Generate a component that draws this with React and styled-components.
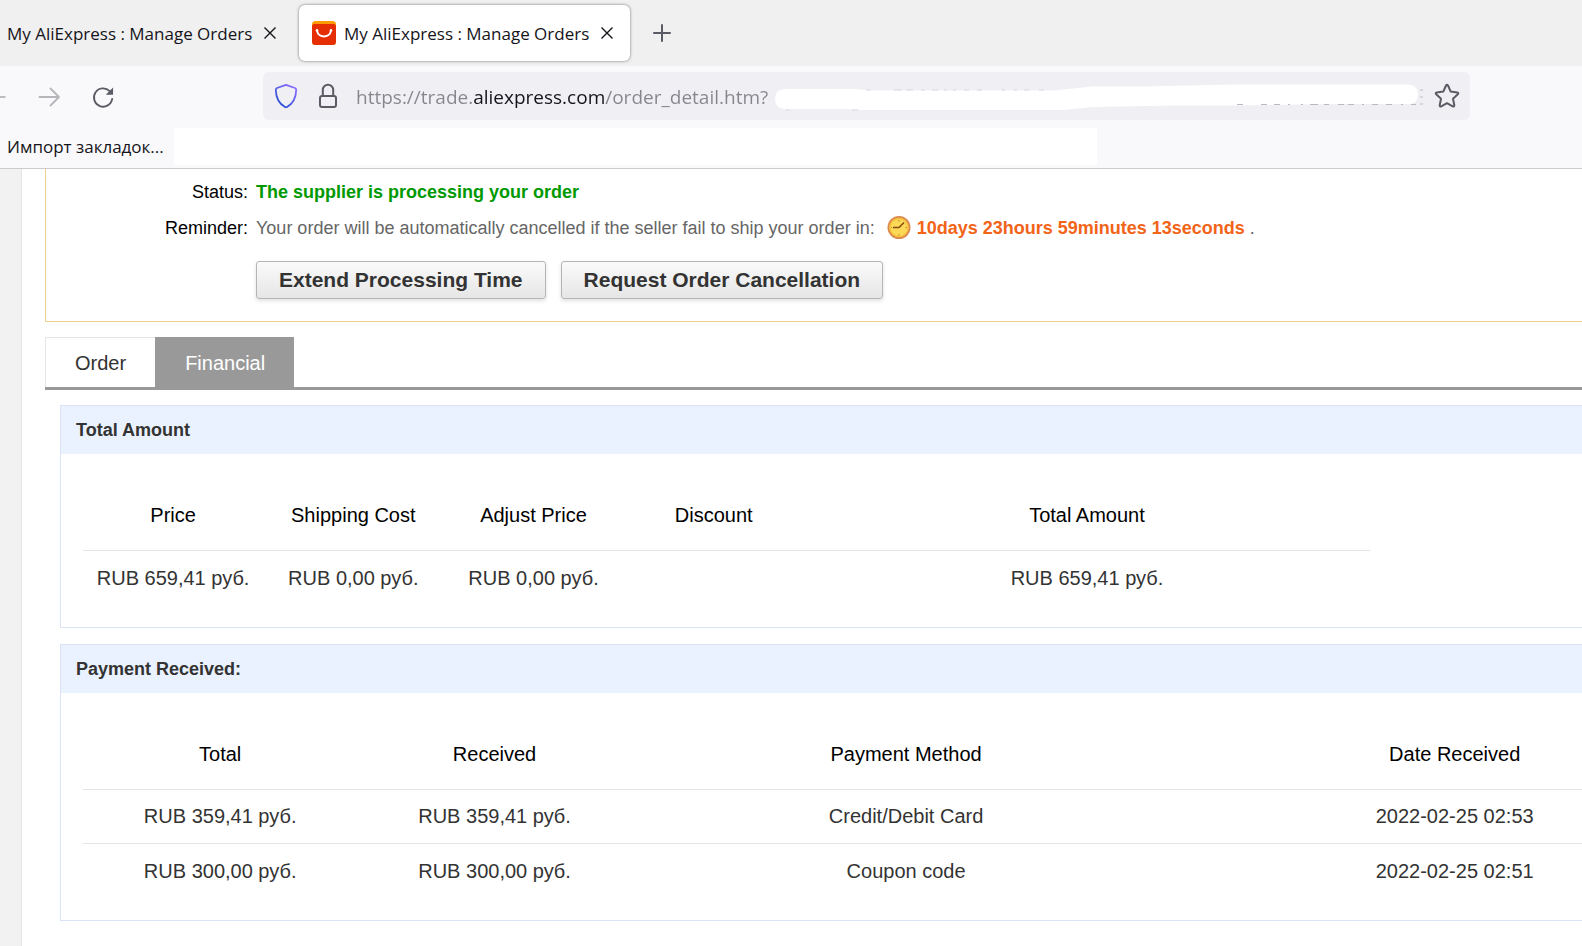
import React from "react";
import styled, { createGlobalStyle } from "styled-components";

const uiFont = '"Open Sans", "Noto Sans", sans-serif';
const pageFont = '"Liberation Sans", Arial, sans-serif';

const GlobalStyle = createGlobalStyle`
  *, *::before, *::after { box-sizing: border-box; }
  body { margin: 0; background: #fff; }
  button { font: inherit; border: 0; background: none; padding: 0; cursor: pointer; }
`;

const Window = styled.div`
  display: flex;
  flex-direction: column;
  min-height: 100vh;
  overflow: hidden;
  font-family: ${uiFont};
`;

/* Browser tabs */

const TabStrip = styled.div`
  display: flex;
  align-items: center;
  height: 66px;
  background: #f0f0f0;
`;

const BrowserTab = styled.div`
  display: flex;
  align-items: center;
  gap: 8px;
  height: 56px;
  padding: 0 13px;
  border-radius: 6px;
  ${(p) =>
    p.$active
      ? "margin-left: 6px; background: #fff; box-shadow: 0 0 3px rgba(60, 60, 75, 0.7);"
      : "padding-left: 7px;"}
`;

const TabTitle = styled.span`
  width: 245px;
  padding-top: 2px;
  font-size: 17px;
  line-height: 24px;
  white-space: nowrap;
  color: #15141a;
`;

const IconButton = styled.button`
  display: flex;
  align-items: center;
  justify-content: center;
  flex: none;
  width: ${(p) => p.$size}px;
  height: ${(p) => p.$size}px;
  color: ${(p) => p.$color || "#5b5b66"};
`;

const NewTab = styled(IconButton)`
  margin-left: 20px;
`;

/* Navigation toolbar */

const Toolbar = styled.div`
  display: flex;
  align-items: center;
  height: 60px;
  padding: 0 115px 0 0;
  background: #f9f9fb;
`;

const NavButtons = styled.div`
  display: flex;
  align-items: center;
  gap: 30px;
  width: 263px;
  padding-top: 2px;
  flex: none;
`;

const AddressBar = styled.div`
  display: flex;
  align-items: center;
  flex: 1;
  height: 48px;
  padding: 0 10px 0 11px;
  border-radius: 6px;
  background: #f0f0f4;
`;

const SiteIcons = styled.div`
  display: flex;
  gap: 18px;
  padding-right: 16px;
`;

const AddressInput = styled.input`
  width: 418px;
  height: 36px;
  flex: none;
  padding: 2px 0 0;
  border: 0;
  outline: 0;
  font-family: ${uiFont};
  font-size: 19px;
  color: transparent;
  background: linear-gradient(90deg, #85858c 117px, #15141a 117px, #15141a 249px, #85858c 249px);
  background-clip: text;
  -webkit-background-clip: text;
`;

const Scribble = styled.svg`
  flex: 1;
  min-width: 0;
  height: 36px;
  margin-right: 10px;
`;

/* Bookmarks bar */

const Bookmarks = styled.div`
  display: flex;
  align-items: center;
  gap: 10px;
  height: 43px;
  padding: 0 485px 2px 7px;
  border-bottom: 1px solid #ccc;
  background: #f9f9fb;
`;

const BookmarkLink = styled.a`
  width: 157px;
  padding-top: 2px;
  flex: none;
  font-size: 17px;
  line-height: 24px;
  white-space: nowrap;
  color: #15141a;
  text-decoration: none;
`;

const BlankStrip = styled.div`
  flex: 1;
  height: 37px;
  background: #fff;
`;

/* Page */

const Page = styled.main`
  display: flex;
  flex: 1;
  overflow: hidden;
  font-family: ${pageFont};
`;

const Gutter = styled.div`
  flex: none;
  width: 22px;
  border-right: 1px solid #e5e5e5;
  background: #f2f2f2;
`;

const Content = styled.div`
  flex: none;
  width: calc(100% + 186px);
  padding: 0 23px 24px;
`;

const StatusBox = styled.section`
  padding: 5px 0 22px;
  margin-bottom: 15px;
  border: 1px solid #efd28c;
  border-top: 0;
`;

const StatusRow = styled.div`
  display: grid;
  grid-template-columns: 202px 1fr;
  column-gap: 8px;
  font-size: 18px;
  line-height: 36px;
  white-space: nowrap;
`;

const StatusLabel = styled.span`
  text-align: right;
  color: #000;
`;

const StatusValue = styled.strong`
  color: #090;
`;

const Reminder = styled.span`
  display: flex;
  align-items: center;
  color: #666;
`;

const ClockIcon = styled.svg`
  flex: none;
  margin: 0 6px 0 12px;
`;

const Countdown = styled.strong`
  margin-right: 5px;
  color: #f26418;
`;

const Actions = styled.div`
  display: flex;
  gap: 15px;
  margin: 15px 0 0 210px;
`;

const ActionButton = styled.button`
  && {
    height: 38px;
    padding: 0 22px;
    border: 1px solid #b5b5b5;
    border-radius: 3px;
    background: linear-gradient(#fafafa, #e6e6e6);
    box-shadow: 0 2px 4px rgba(0, 0, 0, 0.12);
    font-size: 21px;
    font-weight: bold;
    color: #333;
  }
`;

const SectionTabs = styled.div`
  display: flex;
  border-bottom: 3px solid #999;
  margin-bottom: 15px;
`;

const SectionTab = styled.button`
  && {
    height: 50px;
    padding: 1px 29px 0;
    border: 1px solid ${(p) => (p.$active ? "#999" : "#e5e5e5")};
    border-width: 1px 0 0 1px;
    background: ${(p) => (p.$active ? "#999" : "#fff")};
    font-size: 20px;
    color: ${(p) => (p.$active ? "#fff" : "#333")};
  }
`;

const Panels = styled.div`
  display: flex;
  flex-direction: column;
  gap: 16px;
  padding: 0 15px;
`;

const Panel = styled.section`
  border: 1px solid #d9e5f7;
`;

const PanelTitle = styled.h2`
  margin: 0;
  padding: 0 15px;
  background: #eaf2ff;
  font-size: 18px;
  line-height: 48px;
  color: #333;
`;

const PanelBody = styled.div`
  padding: 25px 22px 22px;
`;

const DataTable = styled.table`
  width: ${(p) => p.$width};
  table-layout: fixed;
  border-collapse: separate;
  border-spacing: 0;
  font-size: 20px;
  text-align: center;

  th, td { padding: 0; }
  th {
    height: 72px;
    padding-top: 2px;
    border-bottom: 1px solid #e5e5e5;
    font-weight: normal;
    color: #000;
  }
  td { height: 54px; color: #333; }
  tr:not(:last-child) > td { border-bottom: 1px solid #e5e5e5; }
`;

const totals = {
  widths: ["14%", "14%", "14%", "14%", "44%"],
  head: ["Price", "Shipping Cost", "Adjust Price", "Discount", "Total Amount"],
  rows: [["RUB 659,41 руб.", "RUB 0,00 руб.", "RUB 0,00 руб.", "", "RUB 659,41 руб."]],
};

const payments = {
  widths: ["16.67%", "16.67%", "33.33%", "33.33%"],
  head: ["Total", "Received", "Payment Method", "Date Received"],
  rows: [
    ["RUB 359,41 руб.", "RUB 359,41 руб.", "Credit/Debit Card", "2022-02-25 02:53"],
    ["RUB 300,00 руб.", "RUB 300,00 руб.", "Coupon code", "2022-02-25 02:51"],
  ],
};

function Table({ data, width }) {
  return (
    <DataTable $width={width}>
      <colgroup>
        {data.widths.map((w, i) => (
          <col key={i} width={w} />
        ))}
      </colgroup>
      <thead>
        <tr>
          {data.head.map((h) => (
            <th key={h} scope="col">{h}</th>
          ))}
        </tr>
      </thead>
      <tbody>
        {data.rows.map((row, r) => (
          <tr key={r}>
            {row.map((cell, c) => (
              <td key={c}>{cell}</td>
            ))}
          </tr>
        ))}
      </tbody>
    </DataTable>
  );
}

function CloseButton() {
  return (
    <IconButton type="button" aria-label="Close tab" $size={20} $color="#15141a">
      <svg width="14" height="14" viewBox="0 0 14 14" fill="none" stroke="currentColor" strokeWidth="1.4">
        <path d="M1.5 1.5l11 11M12.5 1.5l-11 11" />
      </svg>
    </IconButton>
  );
}

function Favicon() {
  return (
    <svg width="24" height="24" viewBox="0 0 24 24" aria-hidden="true">
      <rect width="24" height="24" rx="3.5" fill="#ff9b00" />
      <path d="M0 5.5Q0 3 2.5 3h19Q24 3 24 5.5v15Q24 24 20.500 24h-17Q0 24 0 20.500z" fill="#e62e04" />
      <path d="M5 9.500c1.200 8 12.800 8 14 0" fill="none" stroke="#fff" strokeWidth="1.900" strokeLinecap="round" />
      <circle cx="5" cy="9.300" r="1.200" fill="#fff" />
      <circle cx="19" cy="9.300" r="1.200" fill="#fff" />
    </svg>
  );
}

export default function App() {
  return (
    <Window>
      <GlobalStyle />
      <TabStrip>
        <BrowserTab>
          <TabTitle>My AliExpress : Manage Orders</TabTitle>
          <CloseButton />
        </BrowserTab>
        <BrowserTab $active>
          <Favicon />
          <TabTitle>My AliExpress : Manage Orders</TabTitle>
          <CloseButton />
        </BrowserTab>
        <NewTab type="button" aria-label="New tab" $size={24}>
          <svg width="20" height="20" viewBox="0 0 20 20" fill="none" stroke="currentColor" strokeWidth="2" strokeLinecap="round">
            <path d="M10 2v16M2 10h16" />
          </svg>
        </NewTab>
      </TabStrip>

      <Toolbar>
        <NavButtons>
          <IconButton type="button" aria-label="Back" $size={6} $color="#b5b5ba">
            <svg width="6" height="4" viewBox="0 0 6 4" fill="none" stroke="currentColor" strokeWidth="1.800">
              <path d="M0 2h5.500" />
            </svg>
          </IconButton>
          <IconButton type="button" aria-label="Forward" $size={26} $color="#b5b5ba">
            <svg width="26" height="24" viewBox="0 0 26 24" fill="none" stroke="currentColor" strokeWidth="1.800" strokeLinecap="round" strokeLinejoin="round">
              <path d="M3.500 12h19.500M14.500 3.500L23 12l-8.500 8.500" />
            </svg>
          </IconButton>
          <IconButton type="button" aria-label="Reload" $size={22}>
            <svg width="24" height="24" viewBox="0 0 24 24" fill="none" stroke="currentColor" strokeWidth="2" strokeLinecap="round">
              <path d="M22 14A10 10 0 1 1 19.300 5.600" />
              <path d="M23 1.500v8h-8z" fill="currentColor" stroke="none" />
            </svg>
          </IconButton>
        </NavButtons>
        <AddressBar>
          <SiteIcons>
            <IconButton type="button" aria-label="Tracking protection" $size={24}>
              <svg width="24" height="26" viewBox="0 0 24 26" fill="none">
                <defs>
                  <linearGradient id="shield" x1="4" y1="22" x2="20" y2="4" gradientUnits="userSpaceOnUse">
                    <stop offset="0" stopColor="#2450d0" />
                    <stop offset="1" stopColor="#8b6cff" />
                  </linearGradient>
                </defs>
                <path
                  d="M12 1.800L21 5c.9.300 1.200 1 1.200 2-.2 7.500-3 13.500-9.200 17-.7.400-1.300.400-2 0C4.800 20.500 2 14.500 1.800 7c0-1 .3-1.700 1.200-2z"
                  stroke="url(#shield)"
                  strokeWidth="1.800"
                  strokeLinejoin="round"
                />
              </svg>
            </IconButton>
            <IconButton type="button" aria-label="Site security" $size={24}>
              <svg width="20" height="26" viewBox="0 0 20 26" fill="none" stroke="currentColor" strokeWidth="2">
                <rect x="2" y="13" width="16" height="11" rx="2" />
                <path d="M4.800 13V7a5.200 5.200 0 0 1 10.400 0v6" />
              </svg>
            </IconButton>
          </SiteIcons>
          <AddressInput aria-label="Address" defaultValue="https://trade.aliexpress.com/order_detail.htm?" />
          <Scribble viewBox="0 0 650 36" preserveAspectRatio="none" aria-hidden="true">
            <path
              d="M10 11H80L100 12.500H280L318 8.500H370L460 6.500H634Q644 7 644 16.500T634 26H560L460 27.500H400L318 29L290 32H90L70 31H10Q1 30 1 21T10 11z"
              fill="#fff"
            />
            <path
              d="M92 12h5M120 12h8M132 12h7M147 12h4M158 12h6M170 12h3M179 12h3M190 12h5M203 12h5M228 12h3M240 12h3M250 12h5M265 12h5M12 32h3M78 32h6"
              stroke="#d9d9dd"
            />
            <path
              d="M463 26.500h6M487 26.500h6M500 26.500h6M514 26.500h2M527 26.500h2M536 26.500h8M550 26.500h5M564 26.500h6M574 26.500h6M588 26.500h2M598 26.500h6M612 26.500h6M627 26.500h2M637 26.500h5M646 12h3M646 19h3M646 26h3"
              stroke="#b9b9bf"
            />
          </Scribble>
          <IconButton type="button" aria-label="Bookmark this page" $size={26}>
            <svg width="26" height="26" viewBox="0 0 26 26" fill="none" stroke="currentColor" strokeWidth="2" strokeLinejoin="round">
              <path d="M12 2.500Q13 1 14 2.500L16.700 8.600 23.200 9.400Q25 9.900 23.800 11.300L19 15.700 20.300 22.300Q20.300 24 18.700 23.400L13 20.200 7.300 23.400Q5.700 24 5.700 22.300L7 15.700 2.200 11.300Q1 9.900 2.800 9.400L9.300 8.600z" />
            </svg>
          </IconButton>
        </AddressBar>
      </Toolbar>

      <Bookmarks>
        <BookmarkLink href="#import">Импорт закладок...</BookmarkLink>
        <BlankStrip />
      </Bookmarks>

      <Page>
        <Gutter />
        <Content>
          <StatusBox>
            <StatusRow>
              <StatusLabel>Status:</StatusLabel>
              <StatusValue>The supplier is processing your order</StatusValue>
            </StatusRow>
            <StatusRow>
              <StatusLabel>Reminder:</StatusLabel>
              <Reminder>
                Your order will be automatically cancelled if the seller fail to ship your order in:
                <ClockIcon width="24" height="24" viewBox="0 0 24 24" aria-hidden="true">
                  <circle cx="12" cy="11.500" r="10.600" fill="#fbd956" stroke="#d98a50" strokeWidth="1.800" />
                  <circle cx="12" cy="11.500" r="9.200" fill="none" stroke="#f7b93c" strokeWidth="1.200" />
                  <path d="M6 11.500h6l5-5" fill="none" stroke="#8a4a14" strokeWidth="1.500" />
                  <path d="M12 4v1.500M12 18v1.500M18.500 11.500H20M4 11.500h1" stroke="#c98a35" strokeWidth="1.200" />
                </ClockIcon>
                <Countdown>10days 23hours 59minutes 13seconds</Countdown>.
              </Reminder>
            </StatusRow>
            <Actions>
              <ActionButton type="button">Extend Processing Time</ActionButton>
              <ActionButton type="button">Request Order Cancellation</ActionButton>
            </Actions>
          </StatusBox>

          <SectionTabs role="tablist">
            <SectionTab type="button" role="tab" aria-selected="false">Order</SectionTab>
            <SectionTab type="button" role="tab" aria-selected="true" $active>Financial</SectionTab>
          </SectionTabs>

          <Panels>
            <Panel>
              <PanelTitle>Total Amount</PanelTitle>
              <PanelBody>
                <Table data={totals} width="78.2%" />
              </PanelBody>
            </Panel>
            <Panel>
              <PanelTitle>Payment Received:</PanelTitle>
              <PanelBody>
                <Table data={payments} width="100%" />
              </PanelBody>
            </Panel>
          </Panels>
        </Content>
      </Page>
    </Window>
  );
}
